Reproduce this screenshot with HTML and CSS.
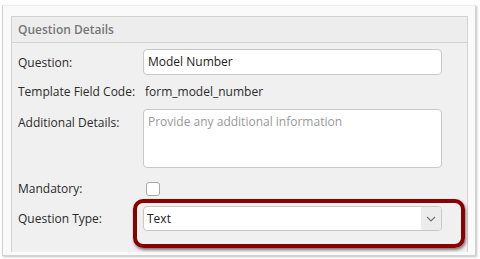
FILE: index.html
```html
<!DOCTYPE html>
<html>
<head>
    <title>Question Details</title>
    <link rel="stylesheet" href="styles.css">
</head>
<body>
    <div class="frame">
        <div class="panel">
            <div class="panel-header">Question Details</div>
            <div class="panel-body">
                <div class="row row-question">
                    <label class="label">Question:</label>
                    <div class="field input">Model Number</div>
                </div>
                <div class="row row-code">
                    <span class="label">Template Field Code:</span>
                    <span class="value">form_model_number</span>
                </div>
                <div class="row row-details">
                    <label class="label">Additional Details:</label>
                    <div class="field textarea placeholder">Provide any additional information</div>
                </div>
                <div class="row row-mandatory">
                    <label class="label">Mandatory:</label>
                    <span class="checkbox"></span>
                </div>
                <div class="row row-type">
                    <label class="label">Question Type:</label>
                    <div class="field select">
                        <span class="select-text">Text</span>
                        <span class="select-arrow">
                            <svg width="10" height="6" viewBox="0 0 10 6"><path d="M1 1 L5 5 L9 1" fill="none" stroke="#777" stroke-width="1.2"/></svg>
                        </span>
                    </div>
                </div>
                <!-- annotation highlight -->
                <div class="highlight"></div>
            </div>
        </div>
    </div>
</body>
</html>
```

FILE: styles.css
```css
html, body {
    margin: 0;
    padding: 0;
    background: #fff;
}
body {
    font-family: 'Open Sans', Arial, sans-serif;
    font-size: 12px;
    color: #2b2b2b;
    width: 480px;
    height: 259px;
    overflow: hidden;
}
.frame {
    margin: 5px 0 0 2px;
    width: 474px;
    height: 251px;
    padding: 10px 7px 0 8px;
    box-sizing: border-box;
    background: #fafafa;
    border: 1px solid #d2d2d2;
    border-top-color: #eee;
    box-shadow: 1px 1px 2px rgba(0,0,0,0.25);
}
.panel {
    width: 457px;
    height: 236px;
    box-sizing: border-box;
    background: #f0f0f0;
    border: 1px solid #d3d3d3;
    border-bottom: none;
}
.panel-header {
    height: 25px;
    line-height: 25px;
    padding-left: 6px;
    background: #ededed;
    border-bottom: 1px solid #d3d3d3;
    color: #777;
    font-weight: 600;
}
.panel-body {
    position: relative;
    padding: 0 25px 0 6px;
}
.row {
    display: flex;
    align-items: center;
}
.label {
    width: 125px;
    flex-shrink: 0;
}
.field {
    flex: 1;
    box-sizing: border-box;
    background: #fff;
    border: 1px solid #c8c8c8;
    border-radius: 4px;
}
.input {
    height: 26px;
    line-height: 24px;
    padding-left: 4px;
    color: #222;
}
.row-question { margin-top: 6px; }
.row-code {
    margin-top: 7px;
    line-height: 20px;
}
.value { padding-left: 2px; }
.row-details {
    margin-top: 7px;
    align-items: flex-start;
}
.row-details .label {
    padding-top: 4px;
    line-height: 20px;
}
.textarea {
    height: 59px;
    padding: 3px 4px;
    line-height: 18px;
}
.placeholder { color: #999; }
.row-mandatory {
    margin-top: 14px;
    height: 13px;
}
.checkbox {
    width: 12px;
    height: 12px;
    margin-left: 3px;
    background: #fff;
    border: 1px solid #a8a8a8;
    border-radius: 3px;
}
.row-type { margin-top: 11px; }
.select {
    height: 25px;
    display: flex;
    align-items: center;
    overflow: hidden;
}
.select-text {
    flex: 1;
    padding-left: 3px;
    color: #222;
}
.select-arrow {
    width: 20px;
    height: 100%;
    background: #ececec;
    display: flex;
    align-items: center;
    justify-content: center;
}
.highlight {
    position: absolute;
    left: 121px;
    top: 150px;
    width: 332px;
    height: 49px;
    box-sizing: border-box;
    border: 4px solid #8a0000;
    border-radius: 10px;
    box-shadow: 1px 2px 3px rgba(0,0,0,0.5);
}
```
